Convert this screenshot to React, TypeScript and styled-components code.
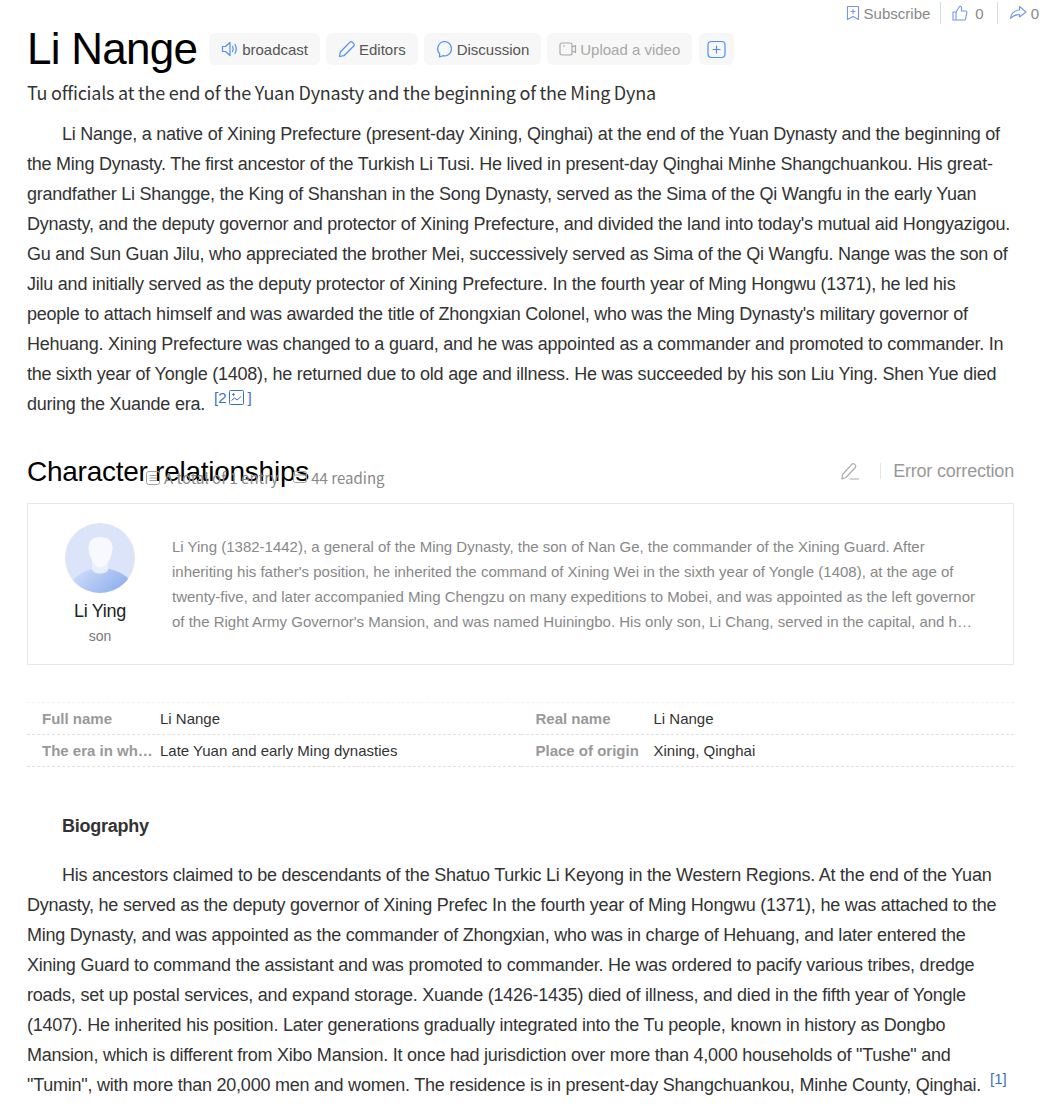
import React from "react"
import styled, { createGlobalStyle } from "styled-components"

const GlobalStyle = createGlobalStyle`
  html, body {
    margin: 0;
    padding: 0;
    background: #fff;
    font-family: "Liberation Sans", Arial, sans-serif;
  }
`

const BLUE = "#4d90f0"
const TOP_BLUE = "#7296f0"
const LINK = "#3a6fc9"

const SpeakerIcon = () => (
  <svg width="18" height="18" viewBox="0 0 18 18" fill="none" stroke={BLUE} strokeWidth="1.2" strokeLinejoin="round" strokeLinecap="round">
    <path d="M1.500 6.500v5h3l4.500 4V2.500l-4.500 4z" />
    <path d="M11.500 6.500c.8 1.500.8 3.500 0 5" />
    <path d="M14 4.500c1.500 2.700 1.500 6.300 0 9" />
  </svg>
)

const PenIcon = () => (
  <svg width="18" height="18" viewBox="0 0 18 18" fill="none" stroke={BLUE} strokeWidth="1.2" strokeLinejoin="round">
    <path d="M1.500 16.500l.8-4.500L12 2.200a1.600 1.600 0 0 1 2.300 0l1.500 1.500a1.600 1.600 0 0 1 0 2.300L6 15.700z" />
  </svg>
)

const CorrectionPenIcon = () => (
  <svg width="18" height="18" viewBox="0 0 18 18" fill="none" stroke="#aaa" strokeWidth="1.2" strokeLinejoin="round" strokeLinecap="round">
    <path d="M1 17l.6-4.500L11 2.200a1.600 1.600 0 0 1 2.300 0l1 1a1.600 1.600 0 0 1 0 2.300L5 15.500z" />
    <path d="M9 17h8.500" />
  </svg>
)

const BubbleIcon = () => (
  <svg width="18" height="18" viewBox="0 0 18 18" fill="none" stroke={BLUE} strokeWidth="1.2" strokeLinejoin="round">
    <path d="M9 1.500a7.300 7.300 0 0 1 0 14.500c-.8 0-1.500-.1-2.200-.3L3.500 17l.2-3.200A7.300 7.300 0 0 1 9 1.500z" />
  </svg>
)

const VideoIcon = () => (
  <svg width="18" height="18" viewBox="0 0 18 18" fill="none" stroke="#a8a8a8" strokeWidth="1.2" strokeLinejoin="round">
    <rect x="1" y="3" width="12" height="12" rx="2" />
    <path d="M13 7l3.500-1.500v7L13 11" />
    <path d="M4 6h2" />
  </svg>
)

const PlusIcon = () => (
  <svg width="19" height="19" viewBox="0 0 19 19" fill="none" stroke={BLUE} strokeWidth="1.200" strokeLinecap="round">
    <rect x="1" y="1.500" width="17" height="16" rx="3.500" />
    <path d="M9.500 6v7M6 9.500h7" />
  </svg>
)

const BookmarkIcon = () => (
  <svg width="14" height="16" viewBox="0 0 14 16" fill="none" stroke={TOP_BLUE} strokeWidth="1.100" strokeLinejoin="round" strokeLinecap="round">
    <path d="M1.500 1.500h11v13L7 11.500l-5.500 3z" />
    <path d="M7 4.500v4M5 6.500h4" />
  </svg>
)

const ThumbIcon = () => (
  <svg width="16" height="16" viewBox="0 0 16 16" fill="none" stroke={TOP_BLUE} strokeWidth="1.100" strokeLinejoin="round">
    <path d="M1 7h3v8H1z" />
    <path d="M4 7l3.500-5.500c.4-.7 2-.4 2 1V6h4c1 0 1.500.8 1.300 1.800L13.500 14c-.2.700-.6 1-1.300 1H4" />
  </svg>
)

const ShareIcon = () => (
  <svg width="18" height="16" viewBox="0 0 18 16" fill="none" stroke={TOP_BLUE} strokeWidth="1.100" strokeLinejoin="round">
    <path d="M10.500 1.500L17 7l-6.500 5V9.500c-3.500 0-6.500 1-9 4 .5-4.500 3.500-8 9-8.500z" />
  </svg>
)

const ListIcon = () => (
  <svg width="14" height="14" viewBox="0 0 14 14" fill="none" stroke="#a0a0a0" strokeWidth="1">
    <rect x=".5" y=".5" width="13" height="13" rx="2" />
    <path d="M3.500 4.500h7M3.500 7h7M3.500 9.500h7" />
  </svg>
)

const ReadIcon = () => (
  <svg width="14" height="14" viewBox="0 0 14 14" fill="none" stroke="#a0a0a0" strokeWidth="1">
    <rect x=".5" y=".5" width="13" height="11" rx="2" />
    <path d="M.5 4h13" />
  </svg>
)

const PictureIcon = () => (
  <svg width="15" height="15" viewBox="0 0 15 15" fill="none" stroke={LINK} strokeWidth="1">
    <rect x=".5" y=".5" width="14" height="14" rx="1" />
    <circle cx="4.500" cy="4.500" r=".8" fill={LINK} />
    <path d="M2.500 10.500l3-2.500 2.500 2 4-3.500" />
  </svg>
)

const AvatarArt = () => (
  <svg width="70" height="70" viewBox="0 0 70 70">
    <defs>
      <linearGradient id="shoulders" x1="0" y1="0" x2="1" y2="0.400">
        <stop offset="0" stopColor="#dbe5fa" />
        <stop offset="1" stopColor="#8fb0ee" />
      </linearGradient>
      <clipPath id="round">
        <circle cx="35" cy="35" r="35" />
      </clipPath>
    </defs>
    <g clipPath="url(#round)">
      <rect width="70" height="70" fill="#dbe4f8" />
      <path d="M8 57C16 49 26 45 35 45s19 3 27 9l8 16H0z" fill="url(#shoulders)" />
      <path d="M27 38h16v8c0 6-16 6-16 0z" fill="#e9effc" />
      <path d="M35.500 14c7 0 12 3.500 12 10.500 0 9-6 20-12 20s-12-11-12-20c0-7 5-10.500 12-10.500z" fill="#f7f9fe" />
    </g>
  </svg>
)

const Page = styled.div`
  width: 1047px;
  height: 1106px;
  box-sizing: border-box;
  padding: 0 33px 0 27px;
  overflow: hidden;
  color: #333;
`

const TopBar = styled.div`
  display: flex;
  justify-content: flex-end;
  align-items: center;
  height: 22px;
  margin: 2px -25px 0 0;
  color: #888;
  font-size: 15px;
`

const TopItem = styled.span`
  display: inline-flex;
  align-items: center;
  gap: 4px;
  height: 22px;
  padding: 0 10px 0 11px;

  & + & {
    border-left: 1px solid #d6dbe3;
  }

  &:nth-child(2) {
    gap: 7px;
    padding-right: 13px;
  }

  &:last-child {
    padding-right: 0;
  }
`

const TitleRow = styled.div`
  display: flex;
  align-items: center;
  gap: 6px;
  height: 46px;
  margin-top: 2px;
`

const Title = styled.h1`
  margin: 0 6px 0 0;
  font-size: 44px;
  font-weight: 400;
  line-height: 46px;
  letter-spacing: -0.75px;
  color: #000;
`

const ActionButton = styled.span<{ $muted?: boolean; $icon?: boolean }>`
  display: inline-flex;
  align-items: center;
  gap: 3px;
  height: 32px;
  margin-left: ${(p) => (p.$icon ? 1 : 0)}px;
  padding: 0 ${(p) => (p.$icon ? 8 : 12)}px;
  border-radius: 6px;
  background: #f7f7f7;
  font-size: 15px;
  color: ${(p) => (p.$muted ? "#a8a8a8" : "#555")};
`

const Subtitle = styled.div`
  margin-top: 7px;
  font-family: "Noto Sans CJK SC", "Noto Sans", sans-serif;
  font-size: 18px;
  line-height: 26px;
  letter-spacing: -0.24px;
  color: #333;
`

const Para = styled.p`
  margin: 0;
  font-size: 18px;
  line-height: 30px;
  letter-spacing: -0.235px;
  text-indent: 35px;
  color: #333;
`

const Intro = styled(Para)`
  margin-top: 14px;
  padding-right: 2px;
`

const Ref = styled.sup`
  display: inline-flex;
  align-items: center;
  gap: 3px;
  margin-left: 9px;
  font-size: 15px;
  line-height: 15px;
  letter-spacing: 0;
  color: ${LINK};
  text-indent: 0;
  vertical-align: 7px;
`

const SectionHead = styled.div`
  position: relative;
  display: flex;
  align-items: center;
  justify-content: space-between;
  height: 40px;
  margin-top: 33px;
`

const SectionTitle = styled.h2`
  margin: 0;
  font-size: 28px;
  font-weight: 400;
  letter-spacing: -0.26px;
  color: #000;
`

const Meta = styled.div`
  position: absolute;
  left: 119px;
  top: 16px;
  display: flex;
  align-items: center;
  font-family: "Noto Sans CJK SC", "Noto Sans", sans-serif;
  font-size: 15px;
  line-height: 20px;
  color: #888;
`

const MetaItem = styled.span`
  display: inline-flex;
  align-items: center;
  gap: 4px;
  margin-right: 15px;
`

const Correction = styled.div`
  display: flex;
  align-items: center;
  padding-bottom: 2px;
  font-size: 18px;
  letter-spacing: -0.2px;
  color: #999;
`

const CorrectionLabel = styled.span`
  margin-left: 21px;
  padding-left: 12px;
  border-left: 1px solid #e5e5e5;
  line-height: 16px;
`

const RelationCard = styled.div`
  display: flex;
  box-sizing: border-box;
  height: 162px;
  margin-top: 11px;
  padding: 19px 36px 0 0;
  border: 1px solid #e6e6e6;
`

const Person = styled.div`
  flex: 0 0 144px;
  display: flex;
  flex-direction: column;
  align-items: center;
`

const PersonName = styled.div`
  margin-top: 5px;
  font-size: 18px;
  line-height: 26px;
  letter-spacing: -0.3px;
  color: #222;
`

const PersonRole = styled.div`
  font-size: 14px;
  line-height: 24px;
  color: #777;
`

const PersonText = styled.div`
  margin-top: 11px;
  height: 100px;
  font-size: 15px;
  line-height: 25px;
  color: #888;
  display: -webkit-box;
  -webkit-box-orient: vertical;
  -webkit-line-clamp: 4;
  overflow: hidden;
`

const InfoGrid = styled.dl`
  display: grid;
  grid-template-columns: 493.5px 493.5px;
  margin: 37px 0 0;
  border-top: 1px dashed #f4f4f4;
`

const InfoCell = styled.div`
  display: flex;
  align-items: center;
  box-sizing: border-box;
  height: 32px;
  padding-left: 15px;
  border-bottom: 1px dashed #e0e0e0;
  font-size: 15px;
`

const InfoLabel = styled.dt`
  width: 112px;
  margin-right: 6px;
  font-weight: 700;
  color: #999;
  white-space: nowrap;
  overflow: hidden;
  text-overflow: ellipsis;
`

const InfoValue = styled.dd`
  margin: 0;
  color: #333;
`

const BodyHead = styled(Para)`
  margin-top: 44px;
  margin-bottom: 19px;
  font-weight: 700;
`

const rows = [
  ["Full name", "Li Nange", "Real name", "Li Nange"],
  ["The era in which he lived", "Late Yuan and early Ming dynasties", "Place of origin", "Xining, Qinghai"],
]

export default function App() {
  return (
    <>
      <GlobalStyle />
      <Page>
        <TopBar>
          <TopItem>
            <BookmarkIcon /> Subscribe
          </TopItem>
          <TopItem>
            <ThumbIcon /> 0
          </TopItem>
          <TopItem>
            <ShareIcon /> 0
          </TopItem>
        </TopBar>
        <TitleRow>
          <Title>Li Nange</Title>
          <ActionButton>
            <SpeakerIcon /> broadcast
          </ActionButton>
          <ActionButton>
            <PenIcon /> Editors
          </ActionButton>
          <ActionButton>
            <BubbleIcon /> Discussion
          </ActionButton>
          <ActionButton $muted>
            <VideoIcon /> Upload a video
          </ActionButton>
          <ActionButton $icon>
            <PlusIcon />
          </ActionButton>
        </TitleRow>
        <Subtitle>Tu officials at the end of the Yuan Dynasty and the beginning of the Ming Dyna</Subtitle>
        <Intro>
          Li Nange, a native of Xining Prefecture (present-day Xining, Qinghai) at the end of the Yuan Dynasty and the
          beginning of the Ming Dynasty. The first ancestor of the Turkish Li Tusi. He lived in present-day Qinghai Minhe
          Shangchuankou. His great-grandfather Li Shangge, the King of Shanshan in the Song Dynasty, served as the Sima
          of the Qi Wangfu in the early Yuan Dynasty, and the deputy governor and protector of Xining Prefecture, and
          divided the land into today's mutual aid Hongyazigou. Gu and Sun Guan Jilu, who appreciated the brother Mei,
          successively served as Sima of the Qi Wangfu. Nange was the son of Jilu and initially served as the deputy
          protector of Xining Prefecture. In the fourth year of Ming Hongwu (1371), he led his people to attach himself
          and was awarded the title of Zhongxian Colonel, who was the Ming Dynasty's military governor of Hehuang. Xining
          Prefecture was changed to a guard, and he was appointed as a commander and promoted to commander. In the sixth
          year of Yongle (1408), he returned due to old age and illness. He was succeeded by his son Liu Ying. Shen Yue
          died during the Xuande era.
          <Ref>
            [2 <PictureIcon /> ]
          </Ref>
        </Intro>
        <SectionHead>
          <SectionTitle>Character relationships</SectionTitle>
          <Meta>
            <MetaItem>
              <ListIcon /> A total of 1 entry
            </MetaItem>
            <MetaItem>
              <ReadIcon /> 44 reading
            </MetaItem>
          </Meta>
          <Correction>
            <CorrectionPenIcon />
            <CorrectionLabel>Error correction</CorrectionLabel>
          </Correction>
        </SectionHead>
        <RelationCard>
          <Person>
            <AvatarArt />
            <PersonName>Li Ying</PersonName>
            <PersonRole>son</PersonRole>
          </Person>
          <PersonText>
            Li Ying (1382-1442), a general of the Ming Dynasty, the son of Nan Ge, the commander of the Xining Guard.
            After inheriting his father's position, he inherited the command of Xining Wei in the sixth year of Yongle
            (1408), at the age of twenty-five, and later accompanied Ming Chengzu on many expeditions to Mobei, and was
            appointed as the left governor of the Right Army Governor's Mansion, and was named Huiningbo. His only son,
            Li Chang, served in the capital, and he died of illness and was buried in his hometown.
          </PersonText>
        </RelationCard>
        <InfoGrid>
          {rows.flatMap((r) => [
            <InfoCell key={r[0]}>
              <InfoLabel>{r[0]}</InfoLabel>
              <InfoValue>{r[1]}</InfoValue>
            </InfoCell>,
            <InfoCell key={r[2]}>
              <InfoLabel>{r[2]}</InfoLabel>
              <InfoValue>{r[3]}</InfoValue>
            </InfoCell>,
          ])}
        </InfoGrid>
        <BodyHead>Biography</BodyHead>
        <Para>
          His ancestors claimed to be descendants of the Shatuo Turkic Li Keyong in the Western Regions. At the end of the
          Yuan Dynasty, he served as the deputy governor of Xining Prefec In the fourth year of Ming Hongwu (1371), he was
          attached to the Ming Dynasty, and was appointed as the commander of Zhongxian, who was in charge of Hehuang, and
          later entered the Xining Guard to command the assistant and was promoted to commander. He was ordered to pacify
          various tribes, dredge roads, set up postal services, and expand storage. Xuande (1426-1435) died of illness, and
          died in the fifth year of Yongle (1407). He inherited his position. Later generations gradually integrated into
          the Tu people, known in history as Dongbo Mansion, which is different from Xibo Mansion. It once had jurisdiction
          over more than 4,000 households of "Tushe" and "Tumin", with more than 20,000 men and women. The residence is in
          present-day Shangchuankou, Minhe County, Qinghai.
          <Ref>[1]</Ref>
        </Para>
      </Page>
    </>
  )
}
